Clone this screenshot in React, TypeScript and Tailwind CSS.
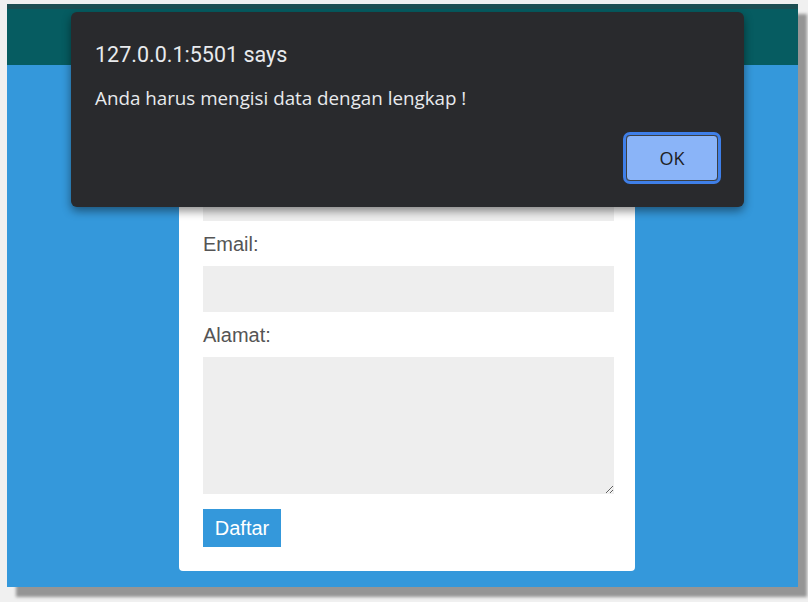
export default function App() {
  return (
    <div className="h-[602px] w-[808px] overflow-hidden bg-[#f0f0f0] pl-[7px] pt-[4px]">
      <div className="relative h-[583px] w-[791px] bg-[#3498db] shadow-[9px_10px_3px_rgba(0,0,0,0.38)]">
        <header className="h-[61px] border-t-[5px] border-[#1c4e52] bg-[#065c61]" />

        <main className="ml-[172px] mt-[53px] w-[456px] rounded-[4px] bg-white pb-6 pl-6 pr-[21px] pt-6 font-['Liberation_Sans',Arial,sans-serif]">
          <label className="block text-[20px] leading-[23px] text-[#555]">Nama:</label>
          <input className="mt-[10px] block h-[46px] w-full bg-[#eeeeee] outline-none" />

          <label className="mt-[12px] block text-[20px] leading-[23px] text-[#555]">Email:</label>
          <input className="mt-[10px] block h-[46px] w-full bg-[#eeeeee] outline-none" />

          <label className="mt-[12px] block text-[20px] leading-[23px] text-[#555]">Alamat:</label>
          <textarea className="mt-[10px] block h-[137px] w-full resize-y bg-[#eeeeee] outline-none" />

          <button className="mt-[15px] h-[38px] w-[78px] bg-[#3498db] text-[20px] text-white">
            Daftar
          </button>
        </main>

        <div className="absolute left-[64px] top-[8px] h-[195px] w-[673px] rounded-[6px] bg-[#292a2d] pl-6 pr-[26px] pt-[29px] text-[#e8eaed] shadow-[0_4px_10px_rgba(0,0,0,0.45)]">
          <p className="font-['Roboto',sans-serif] text-[21.5px] leading-[28px]">127.0.0.1:5501 says</p>
          <p className="mt-[17px] font-['Open_Sans','Noto_Sans',sans-serif] text-[18.8px] leading-[24px]">
            Anda harus mengisi data dengan lengkap !
          </p>
          <div className="mt-[25px] flex justify-end">
            <button className="h-[46px] w-[92px] rounded-[4px] border border-[#3c4043] bg-[#8ab4f8] font-['Open_Sans',sans-serif] text-[18px] text-[#202124] outline outline-[3px] outline-offset-0 outline-[#3f7fe8]">
              OK
            </button>
          </div>
        </div>
      </div>
    </div>
  );
}
